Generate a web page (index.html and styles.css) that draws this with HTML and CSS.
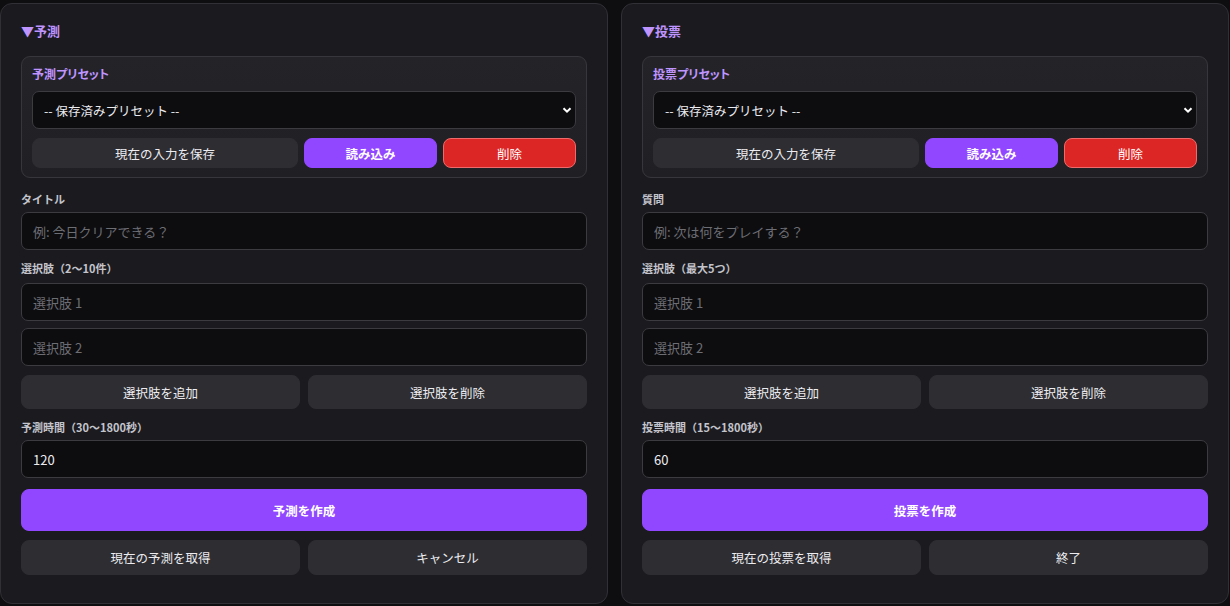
FILE: index.html
```html
<!DOCTYPE html>
<html lang="ja">
<head>
	<meta charset="utf-8">
	<title>予測・投票</title>
	<link rel="stylesheet" href="styles.css">
</head>
<body>

<div class="panels">

	<section class="panel">
		<div class="panel-title">▼予測</div>
		<div class="preset">
			<div class="preset-label">予測プリセット</div>
			<div class="select-wrap">
				<select class="field select"><option>-- 保存済みプリセット --</option></select>
				<svg class="chevron" viewBox="0 0 10 10" width="10" height="10"><path d="M1.5 3.2 L5 6.7 L8.5 3.2" fill="none" stroke="#fff" stroke-width="2"/></svg>
			</div>
			<div class="preset-actions">
				<button class="btn">現在の入力を保存</button>
				<button class="btn btn-primary btn-bold">読み込み</button>
				<button class="btn btn-danger">削除</button>
			</div>
		</div>

		<label class="field-label">タイトル</label>
		<input class="field" type="text" placeholder="例: 今日クリアできる？">

		<label class="field-label gap options-label">選択肢（2〜10件）</label>
		<input class="field" type="text" placeholder="選択肢 1">
		<input class="field next" type="text" placeholder="選択肢 2">
		<div class="row row-options">
			<button class="btn">選択肢を追加</button>
			<button class="btn">選択肢を削除</button>
		</div>

		<label class="field-label gap">予測時間（30〜1800秒）</label>
		<input class="field" type="text" value="120">

		<button class="btn btn-primary btn-bold btn-create">予測を作成</button>
		<div class="row row-bottom">
			<button class="btn">現在の予測を取得</button>
			<button class="btn">キャンセル</button>
		</div>
	</section>

	<section class="panel">
		<div class="panel-title">▼投票</div>
		<div class="preset">
			<div class="preset-label">投票プリセット</div>
			<div class="select-wrap">
				<select class="field select"><option>-- 保存済みプリセット --</option></select>
				<svg class="chevron" viewBox="0 0 10 10" width="10" height="10"><path d="M1.5 3.2 L5 6.7 L8.5 3.2" fill="none" stroke="#fff" stroke-width="2"/></svg>
			</div>
			<div class="preset-actions">
				<button class="btn">現在の入力を保存</button>
				<button class="btn btn-primary btn-bold">読み込み</button>
				<button class="btn btn-danger">削除</button>
			</div>
		</div>

		<label class="field-label">質問</label>
		<input class="field" type="text" placeholder="例: 次は何をプレイする？">

		<label class="field-label gap options-label">選択肢（最大5つ）</label>
		<input class="field" type="text" placeholder="選択肢 1">
		<input class="field next" type="text" placeholder="選択肢 2">
		<div class="row row-options">
			<button class="btn">選択肢を追加</button>
			<button class="btn">選択肢を削除</button>
		</div>

		<label class="field-label gap">投票時間（15〜1800秒）</label>
		<input class="field" type="text" value="60">

		<button class="btn btn-primary btn-bold btn-create">投票を作成</button>
		<div class="row row-bottom">
			<button class="btn">現在の投票を取得</button>
			<button class="btn">終了</button>
		</div>
	</section>

</div>

</body>
</html>
```

FILE: styles.css
```css
* {
	box-sizing: border-box;
}
body {
	margin: 0;
	padding: 3px 1px 0 0;
	background: #0e0e10;
	color: #e8e8ec;
	font-family: "Noto Sans CJK JP", "Noto Sans", sans-serif;
	overflow: hidden;
}
.panels {
	display: grid;
	grid-template-columns: 1fr 1fr;
	gap: 13px;
}
.panel {
	display: flex;
	flex-direction: column;
	padding: 17px 20px 28px;
	background: #1b1b1f;
	border: 1px solid #303036;
	border-radius: 12px;
}
.panel-title {
	font-size: 13px;
	line-height: 20px;
	font-weight: bold;
	color: #bf94ff;
	margin-bottom: 15px;
}
.preset {
	padding: 9px 10px;
	background: linear-gradient(#242428, #202024);
	border: 1px solid #36363c;
	border-radius: 9px;
	margin-bottom: 13px;
}
.preset-label {
	font-size: 12px;
	line-height: 16px;
	font-weight: bold;
	color: #bf94ff;
	font-feature-settings: "palt";
	margin-bottom: 9px;
}
.select-wrap {
	position: relative;
	margin-bottom: 9px;
}
.chevron {
	position: absolute;
	right: 4px;
	top: 14px;
	pointer-events: none;
}
.field {
	display: block;
	width: 100%;
	height: 38px;
	padding: 0 11px;
	background: #0d0d10;
	border: 1px solid #3b3b40;
	border-radius: 7px;
	color: #ececf0;
	font-family: inherit;
	font-size: 13px;
	outline: none;
}
.field::placeholder {
	color: #6d6d74;
}
.select {
	appearance: none;
	-webkit-appearance: none;
	font-size: 12.5px;
}
.field.next {
	margin-top: 7px;
}
.preset-actions {
	display: grid;
	grid-template-columns: 2fr 1fr 1fr;
	gap: 6px;
}
.btn {
	height: 30px;
	padding: 0;
	background: #2d2d32;
	border: 1px solid #2d2d32;
	border-radius: 8px;
	color: #ececf0;
	font-family: inherit;
	font-size: 12.5px;
	cursor: pointer;
}
.btn-primary {
	background: #9147ff;
	border-color: #9147ff;
	color: #fff;
}
.btn-danger {
	background: #dc2626;
	border-color: #ef6a6a;
	color: #fff;
}
.btn-bold {
	font-weight: bold;
}
.field-label {
	display: block;
	font-size: 11px;
	line-height: 16px;
	font-weight: bold;
	color: #c4c4cc;
	margin-bottom: 5px;
}
.field-label.gap {
	margin-top: 10px;
}
.field-label.options-label {
	margin-bottom: 7px;
}
.row {
	display: grid;
	grid-template-columns: 1fr 1fr;
	gap: 8px;
}
.row .btn {
	height: 100%;
}
.row-options {
	height: 34px;
	margin-top: 9px;
}
.btn-create {
	height: 42px;
	margin-top: 11px;
}
.row-bottom {
	height: 35px;
	margin-top: 9px;
}
```
